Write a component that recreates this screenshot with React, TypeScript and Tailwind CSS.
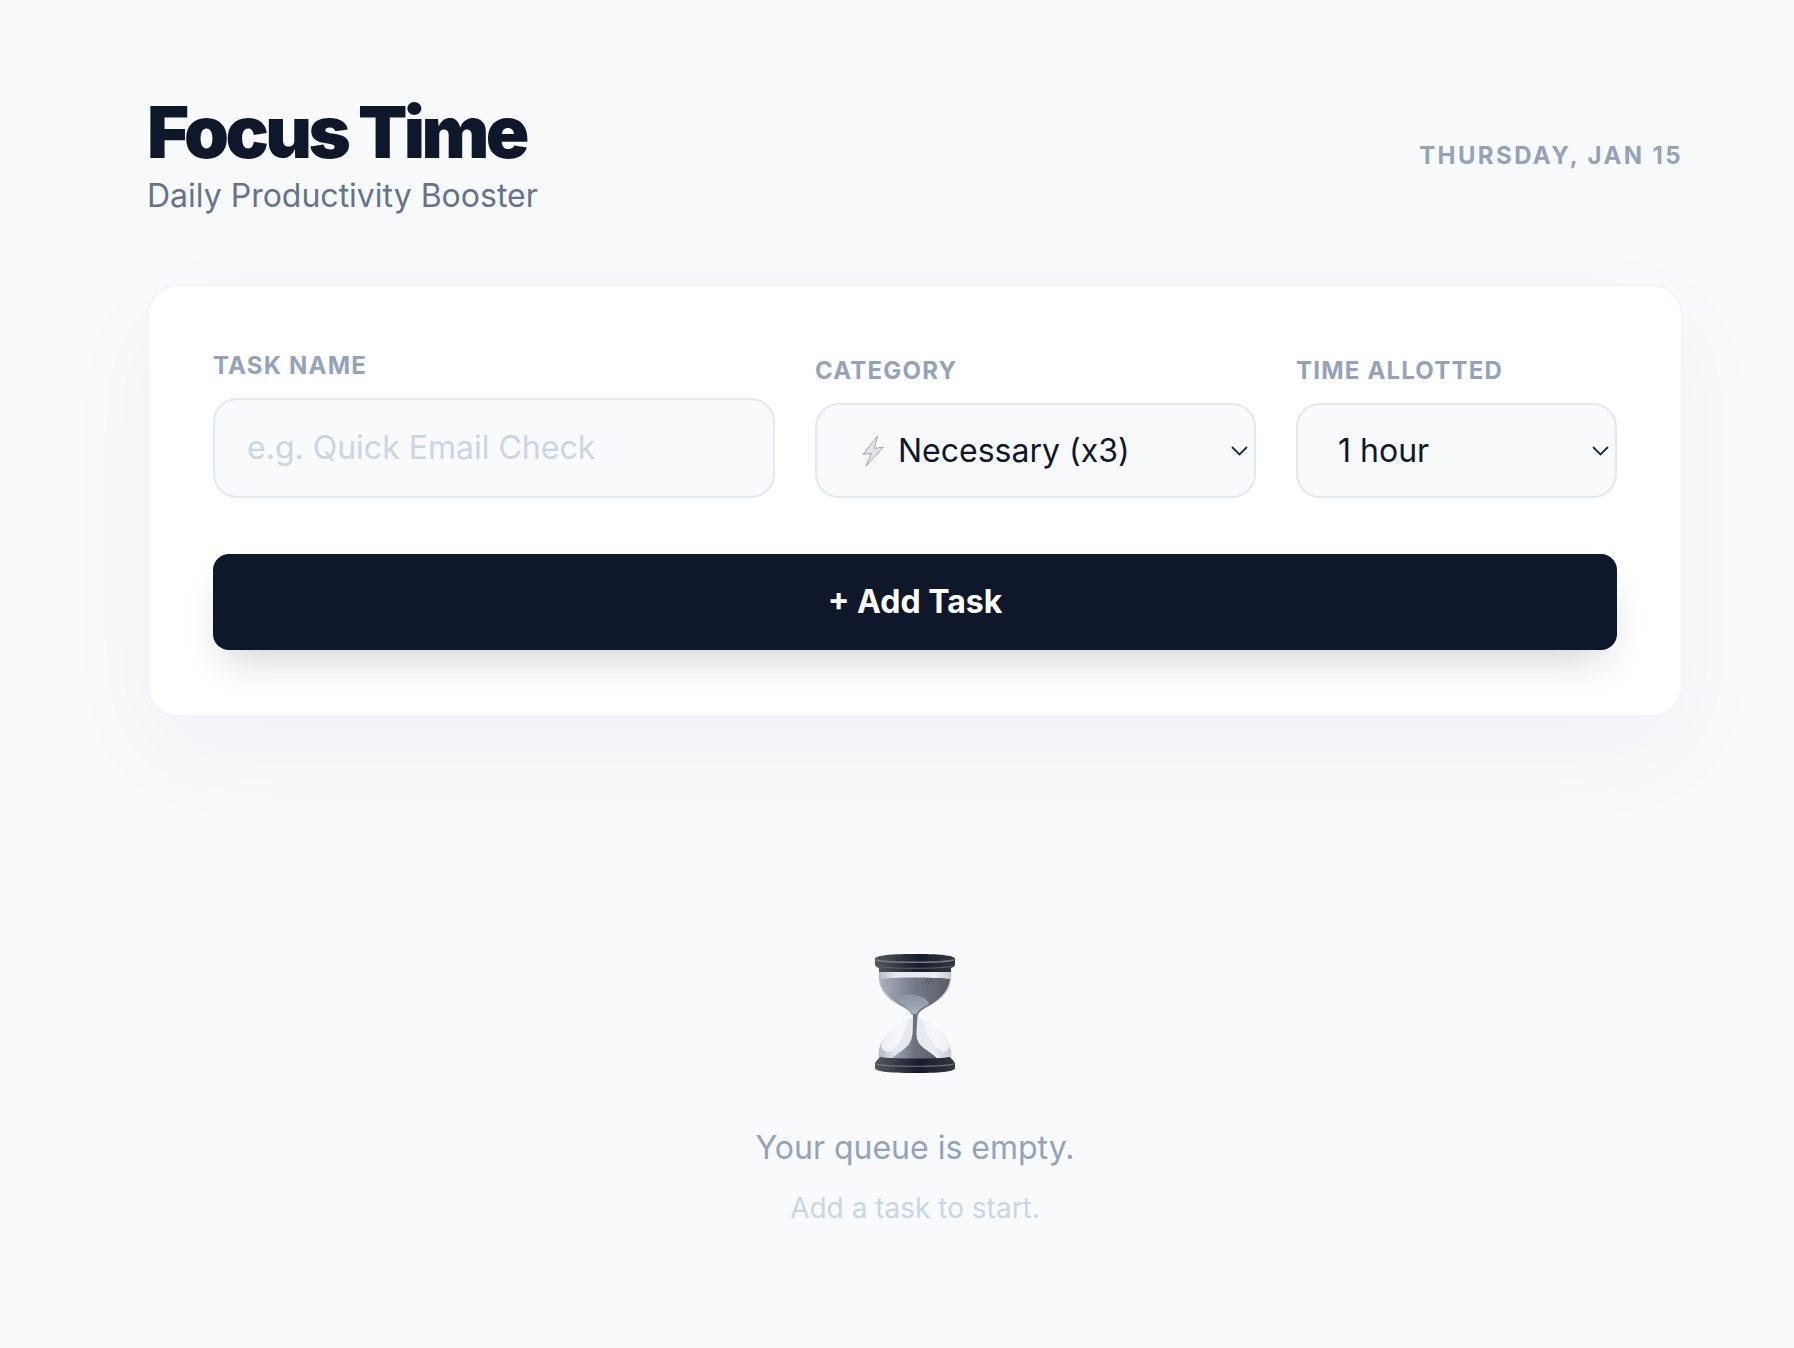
const font = { fontFamily: "Inter, sans-serif" };

function Chevron() {
  return (
    <svg width="17" height="10" viewBox="0 0 17 10" fill="none" stroke="#1e293b" strokeWidth="1.8">
      <path d="M1 1l7.5 7.5L16 1" />
    </svg>
  );
}

function Bolt() {
  return (
    <svg width="26" height="32" viewBox="0 0 26 32" className="shrink-0">
      <path d="M17.5 1 3 19.5l8.5-1.2L6 31 23.5 12l-9 1.5L17.5 1Z" fill="#e2e5ea" stroke="#a3a8b0" strokeWidth="1" strokeLinejoin="round" />
    </svg>
  );
}

function Hourglass() {
  return (
    <svg width="80" height="119" viewBox="0 0 80 119" className="shrink-0">
      <defs>
        <linearGradient id="glass" x1="0" y1="0" x2="1" y2="0">
          <stop offset="0" stopColor="#b4bac4" />
          <stop offset="0.22" stopColor="#e4e7ec" />
          <stop offset="0.78" stopColor="#e9ecf1" />
          <stop offset="1" stopColor="#c6cbd3" />
        </linearGradient>
        <linearGradient id="sandTop" x1="0" y1="0" x2="1" y2="0">
          <stop offset="0" stopColor="#a9b0bc" />
          <stop offset="0.5" stopColor="#74798a" />
          <stop offset="1" stopColor="#5a5d66" />
        </linearGradient>
        <linearGradient id="sandBottom" x1="0" y1="0" x2="1" y2="0">
          <stop offset="0" stopColor="#aab1bd" />
          <stop offset="0.5" stopColor="#6d7280" />
          <stop offset="1" stopColor="#5a5e68" />
        </linearGradient>
        <linearGradient id="funnel" x1="0" y1="0" x2="0" y2="1">
          <stop offset="0" stopColor="#8b92a0" />
          <stop offset="1" stopColor="#a8b2c2" />
        </linearGradient>
        <linearGradient id="cap" x1="0" y1="0" x2="1" y2="0">
          <stop offset="0" stopColor="#55585f" />
          <stop offset="0.55" stopColor="#161c2a" />
          <stop offset="1" stopColor="#34373e" />
        </linearGradient>
      </defs>
      {/* glass */}
      <path d="M4 17C2 34 10 44 24 52c8 4 14 6 14 9 0 3-9 6-19 13C8 82 2 92 4 106h72c2-14-4-24-15-32-10-7-18-10-18-13 0-3 5-5 13-9 14-8 22-18 20-35Z" fill="url(#glass)" />
      {/* upper sand */}
      <path d="M5 25c14-2 56-2 70 0-1 10-8 19-18 25-7 4-12 6-14 11h-6c-2-5-7-7-14-11C13 44 6 35 5 25Z" fill="url(#sandTop)" />
      <path d="M21 44c7-5 17-4 23-2 6 2 9 4 10 8-6 3-11 6-13 11h-3c-3-6-11-10-17-17Z" fill="url(#funnel)" />
      <path d="M50 27h1M53 29h1M55 26h1M58 28h1M52 26h1M47 29h1" stroke="#33363d" strokeWidth="1" />
      {/* lower sand */}
      <path d="M38 60h4.5c0 5-1 14-1 20 0 4 1 7 3 10 4 5 13 9 19 16H15c7-7 15-10 19-16 2-3 3-6 3.500-10 .5-6 .5-15 .5-20Z" fill="url(#sandBottom)" />
      <path d="M6 90c2-7 8-13 14-17 6-3 11-5 13-6-3 8-5 17-11 25-3 3-6 5-9 6-4-1-7-3-7-8Z" fill="#fafbfc" opacity="0.75" />
      <path d="M48 67c6 3 12 6 16 10 6 5 10 10 11 14-1 3-3 6-6 7-4-2-8-5-12-10-4-6-7-13-9-21Z" fill="#f8f9fb" opacity="0.75" />
      {/* caps */}
      <path d="M0 5c0-3 10-5 40-5s40 2 40 5v5c0 2-1 3-4 4v4H4v-4c-3-1-4-2-4-4V5Z" fill="url(#cap)" />
      <path d="M1 6c10 3 68 3 78 0" stroke="#777b84" strokeWidth="1.4" fill="none" />
      <path d="M2 12c12 3 64 3 76 0" stroke="#5d6069" strokeWidth="1.2" fill="none" />
      <path d="M5 103c10 2 60 2 70 0 1 2 5 4 5 7v4c0 3-10 5-40 5s-40-2-40-5v-4c0-3 4-5 5-7Z" fill="url(#cap)" />
      <path d="M1 110c10 3 68 3 78 0" stroke="#777b84" strokeWidth="1.2" fill="none" />
    </svg>
  );
}

export default function App() {
  return (
    <div style={font} className="min-h-[1348px] bg-[#f8fafc] pl-[147px] pr-[111px] pt-[96px]">
      <header className="flex items-center justify-between">
        <div>
          <h1 className="text-[72px] leading-none font-black tracking-[-0.05em] text-[#0f172a]">Focus Time</h1>
          <p className="mt-2 text-[32px] leading-[40px] text-[#64748b]">Daily Productivity Booster</p>
        </div>
        <div className="text-2xl font-bold tracking-[0.1em] text-[#94a3b8]">THURSDAY, JAN 15</div>
      </header>

      <section className="mt-[68px] rounded-[32px] border-2 border-[#f1f5f9] bg-white p-[64px] pb-[65px] shadow-[0_35px_100px_rgba(15,23,42,0.04)]">
        <div className="grid grid-cols-[562px_441px_321px] items-end gap-[40px]">
          <div>
            <label className="mb-4 block text-2xl font-bold tracking-[0.05em] text-[#94a3b8]">TASK NAME</label>
            <div className="flex h-[100px] items-center rounded-[24px] border-2 border-[#e2e8f0] bg-[#f8fafc] pl-[32px] text-[32px] text-[#cbd5e1]">e.g. Quick Email Check</div>
          </div>
          <div>
            <label className="mb-4 block text-2xl font-bold tracking-[0.05em] text-[#94a3b8]">CATEGORY</label>
            <div className="flex h-[95px] items-center justify-between rounded-[24px] border-2 border-[#e2e8f0] bg-[#f8fafc] pl-[43px] pr-[6px] text-[32px] text-[#0f172a]">
              <span className="flex items-center gap-[12px]"><Bolt />Necessary (x3)</span>
              <Chevron />
            </div>
          </div>
          <div>
            <label className="mb-4 block text-2xl font-bold tracking-[0.05em] text-[#94a3b8]">TIME ALLOTTED</label>
            <div className="flex h-[95px] items-center justify-between rounded-[24px] border-2 border-[#e2e8f0] bg-[#f8fafc] pl-[40px] pr-[6px] text-[32px] text-[#0f172a]">
              <span>1 hour</span>
              <Chevron />
            </div>
          </div>
        </div>
        <button className="mt-[56px] h-[96px] w-full rounded-[16px] bg-[#0f172a] text-[32px] font-bold text-white shadow-[0_20px_40px_-12px_rgba(15,23,42,0.2)]">+ Add Task</button>
      </section>

      <div className="mt-[237px] flex flex-col items-center">
        <Hourglass />
        <p className="mt-[51px] text-[32px] leading-[48px] text-[#94a3b8]">Your queue is empty.</p>
        <p className="mt-[15px] text-[28px] leading-[42px] text-[#cbd5e1]">Add a task to start.</p>
      </div>
    </div>
  );
}
